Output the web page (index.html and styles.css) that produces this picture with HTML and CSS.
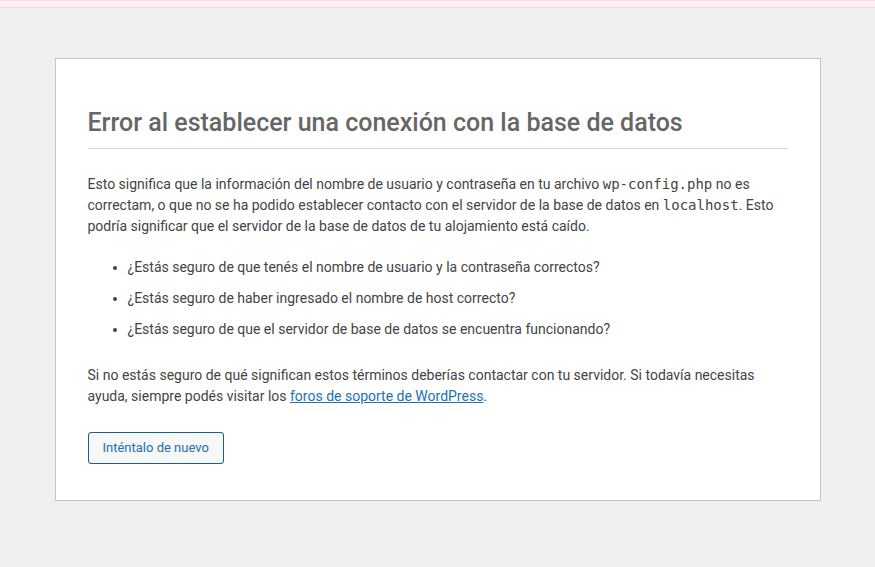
FILE: index.html
```html
<!DOCTYPE html>
<html lang="es">
<head>
<meta charset="utf-8">
<title>Error de la base de datos</title>
<link rel="stylesheet" href="styles.css">
</head>
<body>
<div class="topbar"></div>
<div class="error-page">
  <h1>Error al establecer una conexión con la base de datos</h1>
  <p>Esto significa que la información del nombre de usuario y contraseña en tu archivo <code>wp-config.php</code> no es correctam, o que no se ha podido establecer contacto con el servidor de la base de datos en <code>localhost</code>. Esto podría significar que el servidor de la base de datos de tu alojamiento está caído.</p>
  <ul>
    <li>¿Estás seguro de que tenés el nombre de usuario y la contraseña correctos?</li>
    <li>¿Estás seguro de haber ingresado el nombre de host correcto?</li>
    <li>¿Estás seguro de que el servidor de base de datos se encuentra funcionando?</li>
  </ul>
  <p>Si no estás seguro de qué significan estos términos deberías contactar con tu servidor. Si todavía necesitas ayuda, siempre podés visitar los <a href="#">foros de soporte de WordPress</a>.</p>
  <p class="step"><a class="button" href="#">Inténtalo de nuevo</a></p>
</div>
</body>
</html>
```

FILE: styles.css
```css
html {
  background: #f0f0f1;
}
body {
  margin: 0;
  font-family: Roboto, "Liberation Sans", sans-serif;
  color: #444;
  font-size: 14px;
  line-height: 1.5;
}
.topbar {
  height: 6px;
  background: #fdeff1;
  border-top: 1px solid #f9dfe3;
  border-bottom: 1px solid #f7d6db;
}
.error-page {
  box-sizing: content-box;
  max-width: 700px;
  margin: 50px auto 0;
  padding: 16px 32px;
  background: #fff;
  border: 1px solid #c3c4c7;
}
h1 {
  border-bottom: 1px solid #dadada;
  color: #666;
  font-size: 25px;
  font-weight: 500;
  line-height: 36px;
  margin: 30px 0 0;
  padding: 0 0 7px;
}
p {
  margin: 25px 0 20px;
}
ul {
  margin: 14px 0;
  padding-left: 40px;
}
li {
  margin-bottom: 10px;
}
code {
  font-family: "DejaVu Sans Mono", monospace;
  font-size: 14px;
}
a {
  color: #2271b1;
}
.step {
  margin: 25px 0 20px;
}
.button {
  display: inline-block;
  box-sizing: border-box;
  min-height: 32px;
  line-height: 30px;
  padding: 0 14px;
  font-size: 13px;
  color: #2271b1;
  background: #f6f7f7;
  border: 1px solid #1d5d8c;
  border-radius: 3px;
  text-decoration: none;
  vertical-align: top;
}
```
